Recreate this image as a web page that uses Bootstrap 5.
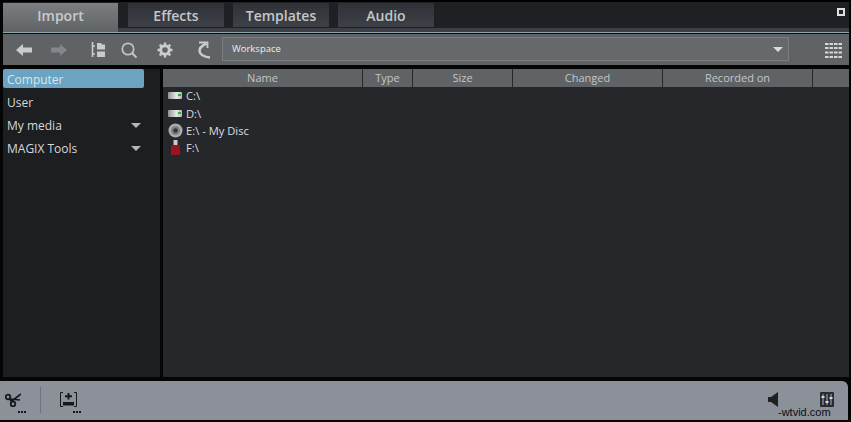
<!DOCTYPE html>
<html lang="en">
<head>
<meta charset="utf-8">
<title>Import</title>
<link href="https://cdn.jsdelivr.net/npm/bootstrap@5.3.0/dist/css/bootstrap.min.css" rel="stylesheet">
<style>
html,body{margin:0;height:100%;background:#000;overflow:hidden}
body{font-family:"Open Sans","Noto Sans",sans-serif;color:#d5d8da}
.app-shell{width:851px;height:422px;background:#050506}
.tab-strip{height:26px;margin:2px 2px 0 3px;padding-top:1px;background:#1e2024;gap:9px;position:relative}
.tab-item{height:24px;width:96px;background:linear-gradient(#2e3136,#3e4147);font-size:14px;font-weight:600;color:#c4c7ca;line-height:26px;text-align:center}
.tab-item.is-on{width:115px;height:29px;margin-right:1px;background:linear-gradient(#7c7f82,#606366);color:#c8cacd;position:relative;z-index:1}
.tab-max{position:absolute;right:4px;top:6px;width:8px;height:8px;border:2px solid #dfe2e5;background:#22252a}
.rule-bar{height:6px;margin:0 2px 0 3px;background:linear-gradient(#3c4046 0 4px,#8fa5ac 4px 5px,#0b0c0e 5px)}
.tool-bar{height:31px;margin:0 2px 0 3px;background:#606366;position:relative}
.tool-ico{position:absolute;top:8px;width:16px;height:16px}
.ws-box{position:absolute;left:219px;top:3px;width:567px;height:24px;border:1px solid #7b7e81;background:#66696c;font-size:9.5px;font-weight:400;color:#eceef0;line-height:21px;padding-left:9px}
.ws-caret{position:absolute;right:5px;top:9px;width:0;height:0;border-left:5px solid transparent;border-right:5px solid transparent;border-top:5px solid #d8dbde}
.work-row{height:308px;margin:4px 2px 0 3px}
.side-pane{width:157px;background:#1c1e22;flex:none}
.side-item{width:141px;height:23px;font-size:12px;line-height:22px;padding-left:4px;color:#d5d8da;position:relative}
.side-item.is-on{height:19px;line-height:21px;margin-bottom:4px;background:#6ba3c1;border-radius:2px;color:#d5e7f0}
.side-caret{position:absolute;right:3px;top:8px;width:0;height:0;border-left:5px solid transparent;border-right:5px solid transparent;border-top:5px solid #b4b7ba}
.main-pane{margin-left:3px;background:#25272b;flex:1}
.head-row{height:18px;background:#5f6366}
.head-cell{font-size:11px;line-height:18px;text-align:center;color:#c3c6c9;border-right:1px solid #25272b;flex:none}
.file-list{padding:0 0 0 5px}
.file-row{height:17.4px;font-size:11.2px;line-height:17px;color:#dcdfe1;gap:3px}
.file-ico{width:15px;height:15px;flex:none}
.status-bar{height:39px;margin-top:4px;background:#8b9099;border-radius:0 6px 0 0;margin-right:3px;position:relative}
.stat-ico{position:absolute}
.stat-sep{position:absolute;left:40px;top:6px;width:1px;height:26px;background:#6f747c}
.stat-dots{position:absolute;top:30px;width:8px;height:2px;background:repeating-linear-gradient(90deg,#15171a 0 2px,transparent 2px 3px)}
.mark-text{position:absolute;left:778px;top:24px;font-family:"Liberation Sans",sans-serif;font-size:11px;line-height:14px;color:#0c0d0f}
</style>
</head>
<body>
<div class="app-shell">
  <div class="tab-strip d-flex">
    <div class="tab-item is-on">Import</div>
    <div class="tab-item">Effects</div>
    <div class="tab-item">Templates</div>
    <div class="tab-item">Audio</div>
    <div class="tab-max"></div>
  </div>
  <div class="rule-bar"></div>
  <div class="tool-bar">
    <svg class="tool-ico" style="left:13px" viewBox="0 0 16 16"><path d="M0 8 7 2v3.500h9v5H7V14z" fill="#c9cccf"/></svg>
    <svg class="tool-ico" style="left:48px" viewBox="0 0 16 16"><path d="M16 8 9 2v3.500H0v5h9V14z" fill="#83868a"/></svg>
    <svg class="tool-ico" style="left:88px" viewBox="0 0 16 16"><path d="M1.500 0v15M1.500 4H4M1.500 12H4" stroke="#c9cccf" stroke-width="1.600" fill="none"/><path d="M6 1h4l1 1.500h3v5H6zM6 9.500h8v5.500H6z" fill="#c9cccf"/></svg>
    <svg class="tool-ico" style="left:118px" viewBox="0 0 16 16"><circle cx="7" cy="7" r="5.700" fill="none" stroke="#c0c3c6" stroke-width="1.700"/><path d="m11 11 4.500 4.500" stroke="#c0c3c6" stroke-width="2.200"/></svg>
    <svg class="tool-ico" style="left:154px" viewBox="0 0 16 16"><circle cx="8" cy="8" r="4.300" fill="none" stroke="#c9cccf" stroke-width="3"/><path d="M8 .500v3M8 12.500v3M.500 8h3M12.500 8h3M2.700 2.700l2 2M11.300 11.300l2 2M13.300 2.700l-2 2M4.700 11.300l-2 2" stroke="#c9cccf" stroke-width="2.400"/></svg>
    <svg class="tool-ico" style="left:194px;top:7px;width:14px;height:18px" viewBox="0 0 14 18"><path d="M2 1.500h8.500V7" fill="none" stroke="#c9cccf" stroke-width="1.800"/><path d="M9.500 2.500C-.5 7 0 15 13 16.500" fill="none" stroke="#c9cccf" stroke-width="2.600"/></svg>
    <div class="ws-box">Workspace<span class="ws-caret"></span></div>
    <svg class="tool-ico" style="left:822px;top:9px;width:17px;height:15px" viewBox="0 0 17 15"><path d="M0 1h17M0 5h17M0 9.500h17M0 14h17" stroke="#d5d8da" stroke-width="1.800"/><path d="M4 0v15M8.500 0v15M13 0v15" stroke="#606366" stroke-width="1"/></svg>
  </div>
  <div class="work-row d-flex">
    <div class="side-pane">
      <div class="side-item is-on">Computer</div>
      <div class="side-item">User</div>
      <div class="side-item">My media<span class="side-caret"></span></div>
      <div class="side-item">MAGIX Tools<span class="side-caret"></span></div>
    </div>
    <div class="main-pane">
      <div class="head-row d-flex">
        <div class="head-cell" style="width:200px">Name</div>
        <div class="head-cell" style="width:50px">Type</div>
        <div class="head-cell" style="width:100px">Size</div>
        <div class="head-cell" style="width:150px">Changed</div>
        <div class="head-cell" style="width:150px">Recorded on</div>
      </div>
      <div class="file-list">
        <div class="file-row d-flex align-items-center"><svg class="file-ico" viewBox="0 0 15 15"><defs><linearGradient id="dg" x1="0" x2="1"><stop offset="0" stop-color="#8f9490"/><stop offset=".6" stop-color="#e6eae6"/><stop offset="1" stop-color="#b5bab5"/></linearGradient></defs><rect y="4" width="14" height="7" rx="1" fill="url(#dg)"/><rect x="10" y="6" width="3" height="2" fill="#27b04a"/></svg>C:\</div>
        <div class="file-row d-flex align-items-center"><svg class="file-ico" viewBox="0 0 15 15"><rect y="4" width="14" height="7" rx="1" fill="url(#dg)"/><rect x="10" y="6" width="3" height="2" fill="#27b04a"/></svg>D:\</div>
        <div class="file-row d-flex align-items-center"><svg class="file-ico" viewBox="0 0 15 15"><circle cx="7.500" cy="7.500" r="7" fill="#a9adaf"/><circle cx="7.500" cy="7.500" r="4.500" fill="#7d8183"/><circle cx="7.500" cy="7.500" r="2.200" fill="#34373a"/></svg>E:\ - My Disc</div>
        <div class="file-row d-flex align-items-center"><svg class="file-ico" viewBox="0 0 15 15"><rect x="5.500" y="0" width="4" height="5" fill="#c9cccf"/><rect x="3" y="5" width="9" height="10" rx="1" fill="#9c1320"/></svg>F:\</div>
      </div>
    </div>
  </div>
  <div class="status-bar">
    <svg class="stat-ico" style="left:5px;top:12px;width:16px;height:14px" viewBox="0 0 16 14"><circle cx="3" cy="4" r="2.300" fill="none" stroke="#16181b" stroke-width="1.800"/><circle cx="8" cy="11" r="2.300" fill="none" stroke="#16181b" stroke-width="1.800"/><path d="M4.500 6 7 9M7 8l9-7M6 6l9 1" stroke="#16181b" stroke-width="1.700"/></svg>
    <span class="stat-dots" style="left:18px"></span>
    <span class="stat-sep"></span>
    <svg class="stat-ico" style="left:60px;top:11px;width:17px;height:15px" viewBox="0 0 17 15"><path d="M3 .500H.500v14H3M14 .500h2.500v14H14" fill="none" stroke="#16181b" stroke-width="1"/><path d="M8.500 1v6.500M5 4.200h7" stroke="#16181b" stroke-width="2"/><rect x="3" y="10" width="11" height="3.500" fill="#16181b"/></svg>
    <span class="stat-dots" style="left:73px"></span>
    <svg class="stat-ico" style="left:768px;top:11px;width:10px;height:15px" viewBox="0 0 10 15"><path d="M0 5h3l7-5v15l-7-5H0z" fill="#1f2225"/></svg>
    <svg class="stat-ico" style="left:820px;top:11px;width:14px;height:15px" viewBox="0 0 14 15"><rect width="14" height="15" rx="1" fill="#282c32"/><path d="M3 2v11M7 2v11M11 2v11" stroke="#aeb3b9" stroke-width="1"/><rect x="1.500" y="4" width="3" height="2" fill="#d4d8dc"/><rect x="5.500" y="9" width="3" height="2" fill="#d4d8dc"/><rect x="9.500" y="5" width="3" height="2" fill="#d4d8dc"/></svg>
    <span class="mark-text">-wtvid.com</span>
  </div>
</div>
<script src="https://cdn.jsdelivr.net/npm/bootstrap@5.3.0/dist/js/bootstrap.bundle.min.js"></script>
</body>
</html>
